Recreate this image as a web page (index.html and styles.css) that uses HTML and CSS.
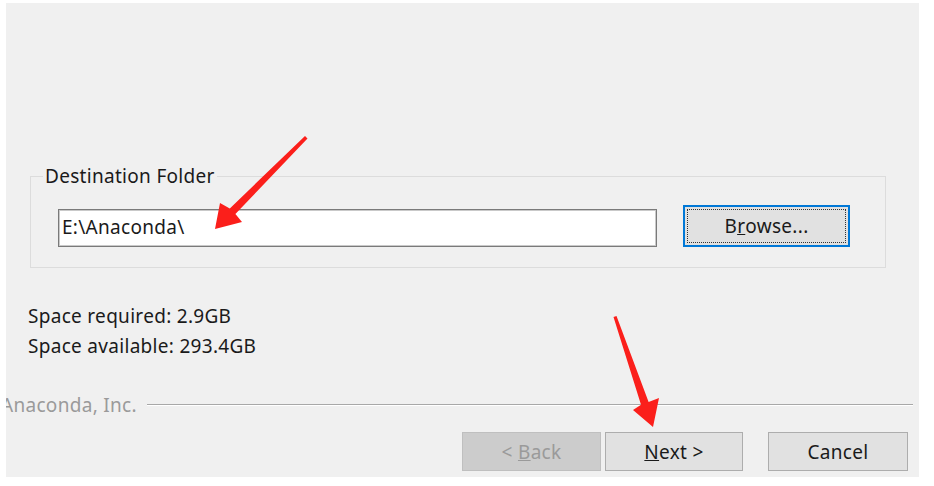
FILE: index.html
```html
<!DOCTYPE html>
<html>
<head>
<meta charset="utf-8">
<link rel="stylesheet" href="styles.css">
</head>
<body>
<div class="panel">
  <fieldset class="group">
    <legend class="legend">Destination Folder</legend>
    <div class="row">
      <div class="path">E:\Anaconda\</div>
      <button class="btn browse"><span class="focus">B<u>r</u>owse...</span></button>
    </div>
  </fieldset>
  <div class="stats">
    <div>Space required: 2.9GB</div>
    <div>Space available: 293.4GB</div>
  </div>
  <div class="brand">
    <span class="brand-text">Anaconda, Inc.</span>
    <span class="rule"></span>
  </div>
  <div class="actions">
    <button class="btn back" disabled>&lt; <u>B</u>ack</button>
    <button class="btn next"><u>N</u>ext &gt;</button>
    <button class="btn cancel">Cancel</button>
  </div>
</div>
<svg class="arrows" width="934" height="486" viewBox="0 0 934 486">
  <polygon fill="#fb1f1b" points="305,136 307.5,138.5 235.4,214 242,222 215,229 220,203 229.8,208.4"/>
  <polygon fill="#fb1f1b" points="613.5,317 616.5,316 648.6,402.1 659,398 653,427 633,410 641,404.7"/>
</svg>
</body>
</html>
```
FILE: styles.css
```css
* { box-sizing: border-box; }
html, body {
  margin: 0;
  padding: 0;
  background: #ffffff;
}
body {
  position: relative;
  width: 934px;
  height: 486px;
  overflow: hidden;
  font-family: "Noto Sans", "Open Sans", sans-serif;
  font-size: 19px;
  letter-spacing: 0.3px;
  color: #1a1a1a;
}
.panel {
  margin: 3px 0 0 6px;
  width: 913px;
  height: 474px;
  background: #f0f0f0;
  overflow: hidden;
  display: flex;
  flex-direction: column;
}
.group {
  margin: 160px 33px 0 24px;
  height: 105px;
  border: 1px solid #dcdcdc;
  padding: 0 35px 0 27px;
  min-width: 0;
}
.legend {
  margin-left: -15px;
  padding: 0 2px;
  line-height: 26px;
}
.row {
  display: flex;
  align-items: flex-end;
  gap: 26px;
  margin-top: 16px;
}
.path {
  flex: 1;
  height: 38px;
  background: #ffffff;
  border: 1px solid #7a7a7a;
  box-shadow: inset 0 0 0 1px #c9c9c9;
  padding-left: 3px;
  line-height: 35px;
}
.btn {
  font-family: inherit;
  font-size: 19px;
  letter-spacing: 0.3px;
  color: #1a1a1a;
  background: #e1e1e1;
  border: 1px solid #adadad;
  padding: 0;
  margin: 0;
}
.browse {
  width: 167px;
  height: 42px;
  border: 2px solid #0078d7;
  padding: 2px;
  display: flex;
}
.focus {
  flex: 1;
  border: 1px dotted #333;
  display: flex;
  align-items: center;
  justify-content: center;
}
.stats {
  margin: 33px 0 0 22px;
  line-height: 30px;
}
.brand {
  margin-top: 32px;
  height: 24px;
  display: flex;
  align-items: center;
  gap: 10px;
  padding-right: 6px;
}
.brand-text {
  margin-left: -5px;
  color: #9a9a9a;
  white-space: nowrap;
}
.rule {
  flex: 1;
  border-top: 1px solid #a8a8a8;
  border-bottom: 1px solid #ffffff;
}
.actions {
  margin-top: 15px;
  display: flex;
  padding-left: 456px;
}
.actions .btn {
  height: 39px;
}
.back {
  width: 139px;
  background: #cccccc;
  border-color: #bfbfbf;
  color: #9a9a9a;
}
.next {
  width: 138px;
  margin-left: 4px;
}
.cancel {
  width: 140px;
  margin-left: 25px;
}
.arrows {
  position: absolute;
  left: 0;
  top: 0;
  pointer-events: none;
}
```
